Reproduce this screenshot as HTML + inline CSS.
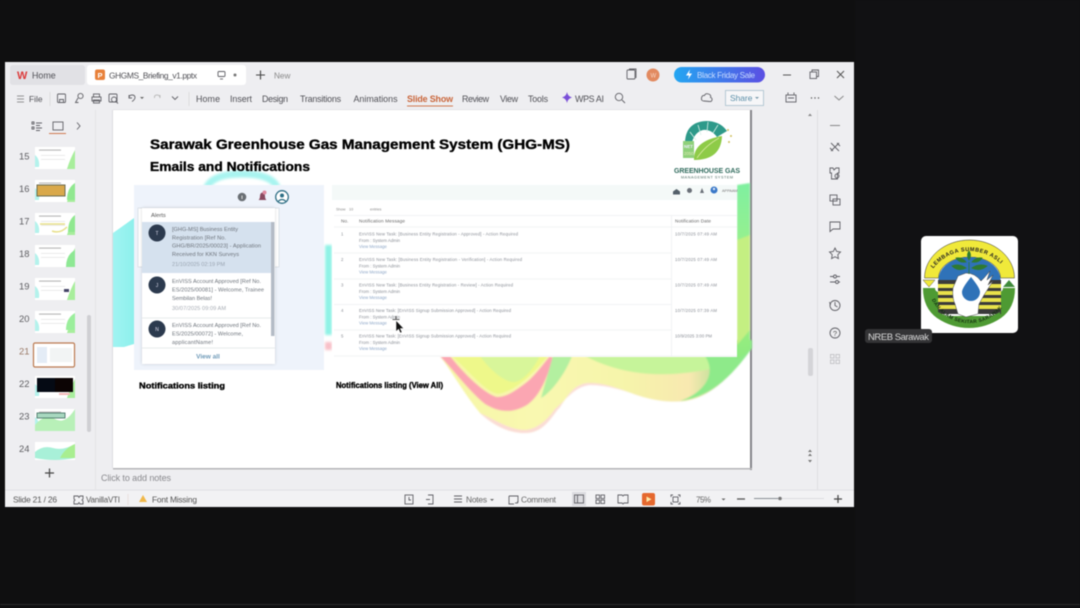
<!DOCTYPE html>
<html><head><meta charset="utf-8"><title>GHGMS Briefing</title>
<style>
html,body{margin:0;padding:0;background:#0f0f10;width:1080px;height:608px;overflow:hidden}
svg{display:block;position:absolute;left:0;top:0;filter:blur(.4px)}
text{font-family:"Liberation Sans",sans-serif}
.ui{font-size:8.900px;fill:#505056}
.i{fill:none;stroke:#606066;stroke-width:.9}
.t{font-size:5.600px;fill:#6e747c}
.r{font-size:4.300px;fill:#8a8e96}
.b{font-size:4.300px;fill:#8fa8c8}
.h{font-weight:bold;fill:#000;stroke:#000;stroke-width:.35}
</style></head><body>
<svg width="1080" height="608" viewBox="0 0 1080 608" xmlns="http://www.w3.org/2000/svg">
<defs>
<filter id="bl"><feGaussianBlur stdDeviation="1.2"/></filter>
<filter id="sb"><feGaussianBlur stdDeviation=".8"/></filter>
<filter id="sh" x="-10%" y="-10%" width="120%" height="120%"><feGaussianBlur stdDeviation="1.500"/></filter>
<linearGradient id="sale" x1="0" x2="1"><stop offset="0" stop-color="#23a6f2"/><stop offset="1" stop-color="#5b4fe3"/></linearGradient>
<linearGradient id="gr" x1="0" x2="0" y1="0" y2="1"><stop offset="0" stop-color="#7ff0a0"/><stop offset=".6" stop-color="#a8f080"/><stop offset="1" stop-color="#8cea80"/></linearGradient>
<linearGradient id="wv" x1="0" x2="1"><stop offset="0" stop-color="#f6f6a6"/><stop offset=".3" stop-color="#f9f8b0"/><stop offset=".6" stop-color="#f6f4aa"/><stop offset=".8" stop-color="#f8e8b0"/><stop offset=".92" stop-color="#a8dc90"/><stop offset="1" stop-color="#86e884"/></linearGradient>
<linearGradient id="cy" x1="0" x2="1"><stop offset="0" stop-color="#a0f4f2"/><stop offset="1" stop-color="#8ef0ec"/></linearGradient>
<path id="arcT" d="M932 270 A45.500 45.500 0 0 1 1006 270"/>
<path id="arcB" d="M931 298 A42 42 0 0 0 1008 298"/>
<g id="th"><rect width="40" height="22" fill="#fff"/><path d="M0 8q5 4 4 12l-4 0z" fill="#b4f2ec"/><path d="M32 22q3-10 8-19v19z" fill="#a8ee9c"/><rect x="4" y="2.500" width="22" height="1.200" fill="#bbb"/><rect x="6" y="8" width="24" height=".7" fill="#e2e2e2"/><rect x="6" y="12" width="24" height=".7" fill="#e2e2e2"/></g>
</defs>

<rect width="1080" height="608" fill="#0f0f10"/>
<rect x="855" y="0" width="225" height="608" fill="#111113"/>
<rect x="0" y="604" width="1080" height="1" fill="#2a2a2a"/>

<!-- window -->
<rect x="5" y="62" width="849" height="445" fill="#eeeef1"/>
<rect x="10" y="65" width="75" height="20" rx="3" fill="#e1e1e5"/>
<rect x="87" y="65" width="159" height="20" rx="3" fill="#fff"/>
<text x="17" y="79" font-size="11" font-weight="bold" fill="#dc3b3b">W</text>
<text x="32" y="78.500" class="ui">Home</text>
<rect x="95" y="69.500" width="10" height="10.500" rx="2" fill="#e8813a"/>
<text x="97.500" y="78" font-size="7.500" fill="#fff" font-weight="bold">P</text>
<text x="109" y="78.500" font-size="8.400" fill="#505056" textLength="88">GHGMS_Briefing_v1.pptx</text>
<rect x="218" y="71.500" width="7" height="5" rx="1" class="i"/><path d="M220 79h3" class="i"/>
<circle cx="235" cy="75" r="1.500" fill="#777"/>
<path d="M256 75h9M260.500 70.500v9" stroke="#444" stroke-width="1.100"/>
<text x="274" y="78.500" font-size="8.200" fill="#888">New</text>

<rect x="627" y="70" width="8" height="9" rx="1" class="i" stroke-width="1.200"/><path d="M629 69h7v9" class="i"/>
<circle cx="653" cy="75" r="6.500" fill="#e28a60"/>
<text x="650.500" y="77.500" font-size="6" fill="#f8d6c4">W</text>
<rect x="674" y="67" width="91" height="15.500" rx="7.700" fill="url(#sale)"/>
<path d="M690 69.500l-4 6h3l-1 4 4-6h-3z" fill="#fff"/>
<text x="697" y="78" font-size="8.200" fill="#c8dcff" textLength="58">Black Friday Sale</text>
<path d="M783 75h8" stroke="#555" stroke-width="1"/>
<rect x="810" y="72" width="6.500" height="6.500" class="i"/><path d="M812 72v-2h6.500v6.500h-2" class="i"/>
<path d="M837 71l7 7M844 71l-7 7" stroke="#555" stroke-width="1"/>

<!-- toolbar -->
<path d="M17 96h7M17 99h7M17 102h7" stroke="#777" stroke-width=".8"/>
<text x="29" y="102" font-size="8.400" fill="#505056">File</text>
<path d="M50 92v14" stroke="#ddd"/>
<rect x="57.500" y="94" width="8" height="8.500" rx="1" class="i"/><path d="M59.500 102.500v-3h4v3" class="i"/>
<circle cx="80.500" cy="96" r="2.600" class="i"/><path d="M78 98l-2.500 4.500h3" class="i"/>
<rect x="92" y="97" width="9" height="4" class="i"/><rect x="93.500" y="94" width="6" height="3" class="i"/><rect x="93.500" y="100" width="6" height="3" class="i"/>
<rect x="109" y="94" width="8" height="8" rx="1" class="i"/><circle cx="114" cy="99.500" r="2.500" class="i"/><path d="M116 101.500l2 2" class="i"/>
<path d="M129 98q0-3 3-3t3 2.500q0 2-3 4M129 95v3h3" class="i"/>
<path d="M140 97l2 2 2-2" fill="#666"/>
<path d="M160 98q0-3-3-3t-2.500 3M160 95v3" fill="none" stroke="#bbb"/>
<path d="M172 96.500l3 3 3-3" class="i"/>
<path d="M189 92v14" stroke="#ddd"/>
<g>
<text x="196" y="102" class="ui" textLength="24">Home</text>
<text x="230" y="102" class="ui" textLength="22">Insert</text>
<text x="262" y="102" class="ui" textLength="26">Design</text>
<text x="300" y="102" class="ui" textLength="41">Transitions</text>
<text x="353.500" y="102" class="ui" textLength="44">Animations</text>
<text x="462" y="102" class="ui" textLength="27">Review</text>
<text x="500" y="102" class="ui" textLength="18">View</text>
<text x="528" y="102" class="ui" textLength="20">Tools</text>
<text x="575" y="102" class="ui" textLength="29">WPS AI</text>
</g>
<text x="407" y="102" font-size="8.900" font-weight="bold" fill="#c9653a" textLength="46">Slide Show</text>
<rect x="407" y="105.500" width="46" height="1" fill="#d07a50"/>
<path d="M567 92q.7 4.300 5 5.500q-4.300 1.200-5 5.500q-.7-4.300-5-5.500q4.300-1.200 5-5.500z" fill="#7a4fd8"/>
<circle cx="619" cy="97" r="3.700" class="i"/><path d="M622 100l3 3" class="i"/>
<path d="M704 101q-3 0-2.500-3t3-2.500q1-2.500 4-1.500t2 3.500q2 .5 1.500 2.500t-2.500 1.500z" class="i"/>
<rect x="725.500" y="90.500" width="38" height="15" fill="#f6f6f8" stroke="#a8c0cc" stroke-width=".8"/>
<text x="730" y="101" font-size="8.400" fill="#5a8ea8">Share</text><path d="M755 97l2 2 2-2" fill="#7a99aa"/>
<rect x="786" y="95" width="10" height="7" class="i"/><path d="M788 92.500v2M794 92.500v2M788 98h6" class="i"/>
<circle cx="811.500" cy="98" r=".7" fill="#555"/><circle cx="815" cy="98" r=".7" fill="#555"/><circle cx="818.500" cy="98" r=".7" fill="#555"/>
<path d="M834.500 96l4.500 4 4.500-4" fill="none" stroke="#888"/>

<!-- left panel -->
<path d="M95.500 110v380" stroke="#e3e3e6"/>
<path d="M32 122h2v2h-2zM32 127h2v2h-2z" class="i"/><path d="M36 123h6M36 125.500h4M36 128h6M36 130.500h4" class="i"/>
<rect x="53" y="122" width="10" height="8" class="i"/><rect x="49" y="133" width="17" height="1" fill="#cf7a50"/>
<path d="M77 122.500l3 3.500-3 3.500" class="i"/>

<g font-size="9.400" fill="#5c5c60">
<text x="19" y="159.500">15</text><text x="19" y="192">16</text><text x="19" y="224.500">17</text><text x="19" y="257">18</text><text x="19" y="289.500">19</text><text x="19" y="322">20</text><text x="19" y="354.500" fill="#9a7a68">21</text><text x="19" y="387">22</text><text x="19" y="419.500">23</text><text x="19" y="452">24</text>
</g>
<use href="#th" x="35" y="147"/>
<use href="#th" x="35" y="180"/><rect x="37" y="185" width="28" height="11" fill="#d9a84a" stroke="#6b6b50"/><path d="M67 200q0-12 8-17v17z" fill="#90e890"/>
<use href="#th" x="35" y="213"/><path d="M40 224h25M52 231q8 3 15-4" stroke="#e8e08a" stroke-width="1.500" fill="none"/><path d="M68 232q0-12 7-17v17z" fill="#90e890"/>
<use href="#th" x="35" y="245"/><path d="M66 267q0-12 9-17v17z" fill="#8ee894"/>
<use href="#th" x="35" y="278"/><rect x="64" y="289" width="5" height="3" fill="#446"/>
<use href="#th" x="35" y="311"/><path d="M66 330q0-12 9-17v17z" fill="#9bee9c"/>
<rect x="33.500" y="343" width="41" height="24" rx="1.500" fill="#fff" stroke="#bb7a50" stroke-width="1.200"/>
<rect x="37" y="347" width="10" height="16" fill="#e4ecf6"/><rect x="50" y="348" width="22" height="14" fill="#f2f4f4"/>
<use href="#th" x="35" y="376"/><rect x="37" y="378" width="18" height="14" fill="#050a14"/><rect x="55" y="378" width="18" height="14" fill="#0c0404"/><rect x="59" y="393" width="11" height="2" fill="#f4b8b8"/>
<use href="#th" x="35" y="409"/><path d="M35 425q10-12 20-6t20-10v22h-40z" fill="#b8f0b8"/><rect x="37" y="413" width="28" height="5" fill="#a8d8c0" stroke="#3a6a5a" stroke-width=".8"/>
<g><rect x="35" y="442" width="40" height="18" fill="#fff"/><path d="M35 452q8-7 18-4t22-4v14q-20 4-40 0z" fill="#a8f0d8"/><path d="M60 458q5-10 15-14v14z" fill="#a8ee90"/></g>
<rect x="87" y="315" width="4" height="117" rx="2" fill="#cfcfd3"/>
<path d="M45 473h9M49.500 468.500v9" stroke="#444" stroke-width="1.200"/>

<!-- slide -->
<rect x="750" y="110" width="2" height="360" fill="#85858a"/>
<rect x="113" y="468" width="639" height="1.500" fill="#b5b5b8"/>
<rect x="113" y="109.500" width="637" height="1" fill="#d8d8dc"/>
<rect x="112" y="110" width="1" height="358" fill="#dcdce0"/>
<rect x="113" y="110" width="637" height="358" fill="#fff"/>

<!-- decorative shapes -->
<path d="M113 233L134 218V344L124 347H113Z" fill="url(#cy)"/>
<g filter="url(#bl)">
<path d="M206 190q4-16 36-16t36 16" fill="none" stroke="#a8f4f0" stroke-width="7"/>
<rect x="325" y="245" width="7" height="90" fill="#8ff2e6"/>
<rect x="325" y="342" width="7" height="8" fill="#f8c0c8"/>
</g>
<g filter="url(#sb)">
<!-- main wave body -->
<path d="M440 356C452 372 465 395 480 413C495 427 510 433 525 433C545 433 552 415 560 407C568 395 575 383 590 383C610 383 630 394 647 398C662 402 675 402 685 401C712 397 735 372 752 348L752 340H440Z" fill="url(#wv)"/>
<!-- pink rim along the lower edge -->
<path d="M480 413C495 427 510 433 525 433C545 433 552 415 560 407C568 395 575 383 590 383C610 383 630 394 647 398C630 393 610 385 590 385C575 386 566 400 555 409C548 419 538 429 525 430C510 430 495 420 480 413Z" fill="#fbdcd6"/>
<!-- pink band -->
<path d="M440 356C455 372 470 392 485 404C498 412 512 414 527 405C540 396 547 378 553 358L550 356C540 368 533 378 523 385C512 393 505 397 497 397C485 394 465 375 450 356Z" fill="#fba6b2"/>
<!-- upper soft greens -->
<path d="M452 356C470 372 485 392 498 394C515 392 535 372 548 356Z" fill="#eef88a"/>
<path d="M480 356C490 370 505 383 515 382C525 380 535 366 540 356Z" fill="#d8f69a"/>
<path d="M553 356L541 398C552 392 566 372 572 356Z" fill="#b3f0a0"/>
<path d="M585 356Q640 385 715 368Q732 362 742 356Z" fill="#c6f49a"/>
<path d="M680 401C712 397 735 372 752 348L752 340L705 356C718 375 702 394 680 401Z" fill="#8eea8a"/>
<path d="M737 185L750 183V350L737 360Z" fill="url(#gr)"/>
<path d="M737 240L750 235V330L737 345Z" fill="#c4ef82"/>
</g>

<text x="150" y="149" font-size="14" class="h" textLength="420" lengthAdjust="spacingAndGlyphs">Sarawak Greenhouse Gas Management System (GHG-MS)</text>
<text x="150" y="171" font-size="12.500" class="h" textLength="160" lengthAdjust="spacingAndGlyphs">Emails and Notifications</text>

<!-- GHG logo -->
<g>
<path d="M685 142Q686 122 706 121Q720 121 727 131L717 137Q711 129 703 130Q695 132 692 142Z" fill="#2e9a8a"/>
<path d="M690 132l6 8M698 125l3 10M708 122l-1 10M718 125l-5 8" fill="none" stroke="#d8f0e8" stroke-width=".8"/>
<rect x="683" y="141" width="11" height="17" fill="#8fd07a"/>
<text x="684" y="148" font-size="4.500" font-weight="bold" fill="#eef">NET</text>
<text x="684" y="155" font-size="4.300" fill="#e4ecb8">2050</text>
<path d="M694 160q-1-19 28-24q-1 24-28 24z" fill="#8ecb48"/>
<path d="M697 158q8-12 22-20" stroke="#d8eaa0" fill="none" stroke-width=".8"/>
<circle cx="728" cy="130" r="1" fill="#d0c060"/><circle cx="731" cy="136" r="1" fill="#d0c060"/><circle cx="729" cy="142" r="1" fill="#d0c060"/>
<text x="674" y="173" font-size="7" font-weight="bold" fill="#2f6a5c" textLength="66">GREENHOUSE GAS</text>
<text x="681" y="178.500" font-size="3.700" fill="#4a6a60" textLength="52">MANAGEMENT SYSTEM</text>
</g>

<!-- left screenshot -->
<rect x="134" y="185" width="190" height="185" fill="#eef3fb"/>
<rect x="138" y="208" width="141" height="59" fill="#fff" stroke="#dde2e8"/>
<rect x="142" y="208" width="133" height="156" fill="#000" opacity=".16" filter="url(#sh)"/>
<rect x="142" y="208" width="133" height="156" fill="#fff"/>
<rect x="142" y="222" width="129" height="51" fill="#d5e1ee"/>
<rect x="271" y="222" width="3.500" height="114" fill="#b4bbc6"/>
<path d="M142 318h129M142 348h133" stroke="#e0e3e8" stroke-width=".8"/>
<text x="151" y="217" font-size="5.800" fill="#555">Alerts</text>
<circle cx="157" cy="233" r="8.500" fill="#2c3a4e"/><text x="157" y="235" font-size="5" fill="#dde" text-anchor="middle">T</text>
<circle cx="157" cy="285" r="8.500" fill="#2c3a4e"/><text x="157" y="287" font-size="5" fill="#dde" text-anchor="middle">J</text>
<circle cx="157" cy="329" r="8.500" fill="#2c3a4e"/><text x="157" y="331" font-size="5" fill="#dde" text-anchor="middle">N</text>
<text x="172" y="231" class="t" textLength="66">[GHG-MS] Business Entity</text>
<text x="172" y="239.500" class="t" textLength="54">Registration [Ref No.</text>
<text x="172" y="247.500" class="t" textLength="89">GHG/BR/2025/00023] - Application</text>
<text x="172" y="256" class="t" textLength="67">Received for KKN Surveys</text>
<text x="172" y="266" class="t" style="fill:#9aa5b2" textLength="53">21/10/2025 02:19 PM</text>
<text x="172" y="283" class="t" textLength="89">EnVISS Account Approved [Ref No.</text>
<text x="172" y="291.500" class="t" textLength="92">ES/2025/00081] - Welcome, Trainee</text>
<text x="172" y="300" class="t" textLength="40">Sembilan Belas!</text>
<text x="172" y="310" class="t" style="fill:#a8adb5" textLength="54">30/07/2025 09:09 AM</text>
<text x="172" y="327" class="t" textLength="89">EnVISS Account Approved [Ref No.</text>
<text x="172" y="335.500" class="t" textLength="71">ES/2025/00072] - Welcome,</text>
<text x="172" y="344" class="t" textLength="41">applicantName!</text>
<text x="208" y="358.500" font-size="6.500" fill="#6f9ab8" font-weight="bold" text-anchor="middle">View all</text>
<circle cx="242" cy="197" r="4.300" fill="#6a6f74"/><rect x="241.500" y="195.500" width="1" height="3.500" fill="#ddd"/>
<path d="M258.500 200q1.500-1 1.500-4t2.500-3.500q2.500.5 2.500 3.500t1.500 4z" fill="#8a4a60"/><circle cx="264.500" cy="192.500" r="2" fill="#e08aa0"/>
<circle cx="282" cy="197" r="6.300" fill="#fff" stroke="#2f6f85" stroke-width="1.300"/><circle cx="282" cy="195.500" r="2" fill="#2f6f85"/><path d="M278 201.500q4-4 8 0" stroke="#2f6f85" fill="none" stroke-width="1.200"/>
<text x="139" y="388.500" font-size="8.600" class="h" textLength="86" lengthAdjust="spacingAndGlyphs">Notifications listing</text>

<!-- right screenshot -->
<rect x="332" y="185" width="405" height="172" fill="#fff"/>
<rect x="332" y="185" width="405" height="15" fill="#f4f9f8"/>
<path d="M673 191.500l3.500-2.500 3.500 2.500v3h-7z" fill="#54606a"/>
<circle cx="689.500" cy="190.500" r="2.500" fill="#6a7078"/>
<path d="M700 193l2-5 2 5z" fill="#6a7078"/>
<circle cx="714" cy="190" r="3.500" fill="#3b78c8"/><circle cx="714" cy="189" r="1.200" fill="#dce8f8"/>
<text x="722" y="192" font-size="3.800" fill="#777">APPAAM</text>
<text x="336" y="210.500" font-size="3.800" fill="#888">Show</text><text x="349" y="210.500" font-size="3.800" fill="#888">10</text><text x="370" y="210.500" font-size="3.800" fill="#888">entries</text>
<path d="M334 215.500h403M334 227h403" stroke="#eef0f2" stroke-width=".8"/>
<path d="M671.500 215.500v141" stroke="#eef0f2" stroke-width=".8"/>
<text x="341" y="222.500" font-size="4.700" fill="#666">No.</text>
<text x="359" y="222.500" font-size="4.700" fill="#666" textLength="46">Notification Message</text>
<text x="675" y="222.500" font-size="4.700" fill="#666" textLength="36">Notification Date</text>
<path d="M334 253h337M334 279h337M334 304.500h337M334 330h337M334 356h403" stroke="#eef0f2" stroke-width=".8"/>

<text x="341" y="235.500" class="r">1</text><text x="359" y="235.500" class="r" textLength="159">EnVISS New Task: [Business Entity Registration - Approved] - Action Required</text><text x="359" y="242" class="r">From : System Admin</text><text x="359" y="248" class="b">View Message</text><text x="675" y="235.500" class="r" textLength="42">10/7/2025 07:49 AM</text>
<text x="341" y="261" class="r">2</text><text x="359" y="261" class="r" textLength="163">EnVISS New Task: [Business Entity Registration - Verification] - Action Required</text><text x="359" y="267.500" class="r">From : System Admin</text><text x="359" y="273.500" class="b">View Message</text><text x="675" y="261" class="r" textLength="42">10/7/2025 07:49 AM</text>
<text x="341" y="286.500" class="r">3</text><text x="359" y="286.500" class="r" textLength="154">EnVISS New Task: [Business Entity Registration - Review] - Action Required</text><text x="359" y="293" class="r">From : System Admin</text><text x="359" y="299" class="b">View Message</text><text x="675" y="286.500" class="r" textLength="42">10/7/2025 07:49 AM</text>
<text x="341" y="312" class="r">4</text><text x="359" y="312" class="r" textLength="152">EnVISS New Task: [EnVISS Signup Submission Approved] - Action Required</text><text x="359" y="318.500" class="r">From : System Admin</text><text x="359" y="324.500" class="b">View Message</text><text x="675" y="312" class="r" textLength="42">10/7/2025 07:39 AM</text>
<text x="341" y="337.500" class="r">5</text><text x="359" y="337.500" class="r" textLength="152">EnVISS New Task: [EnVISS Signup Submission Approved] - Action Required</text><text x="359" y="344" class="r">From : System Admin</text><text x="359" y="350" class="b">View Message</text><text x="675" y="337.500" class="r" textLength="37">10/9/2025 3:00 PM</text>

<text x="336" y="388" font-size="8.400" class="h" textLength="107" lengthAdjust="spacingAndGlyphs">Notifications listing (View All)</text>

<!-- cursor -->
<path d="M396 320.500v11l2.600-2.400 1.700 3.900 1.700-.8-1.700-3.700h3.400z" fill="#111" stroke="#fff" stroke-width=".5"/>
<path d="M392.500 319.500h7M396 316v3" stroke="#222" stroke-width=".8"/>

<!-- right scroll & sidebar -->
<path d="M808 116l2-2.500 2 2.500z" fill="#888"/>
<rect x="808" y="348" width="5" height="28" rx="2" fill="#d4d4d8"/>
<path d="M808 452l2-2.500 2 2.500zM808 456l2-2.500 2 2.500zM808 460l2 2.500 2-2.500z" fill="#777"/>
<path d="M817.500 110v380" stroke="#dedee2"/>
<path d="M830 125.500h10" stroke="#888" stroke-width="1"/>
<path d="M831 143l8 8M839 143l-8 8M830 148l3 3M837 143l3 3" class="i" stroke-width="1.200"/>
<path d="M830 168h3l1 2 2-2h3v5h-1.500v6h-6v-6h-1.500z" class="i"/><circle cx="837" cy="176" r="2" class="i"/>
<rect x="830" y="195" width="7" height="6" class="i"/><rect x="833" y="199" width="7" height="6" class="i"/>
<path d="M830 222h10v7h-7l-3 2.500z" class="i"/>
<path d="M835 248l1.700 3.500 3.800.5-2.700 2.700.6 3.800-3.400-1.800-3.400 1.800.6-3.800-2.700-2.700 3.800-.5z" class="i"/>
<circle cx="835" cy="276.500" r="1.500" class="i"/><path d="M830 276.500h3.500M836.500 276.500h3.500M830 282h5.500M838.500 282h1.500" class="i"/><circle cx="837" cy="282" r="1.500" class="i"/>
<circle cx="835" cy="305.500" r="5" class="i"/><path d="M835 302v3.500l2.500 1.500M829.500 302l1 3" class="i"/>
<circle cx="835" cy="333" r="5" class="i"/><text x="835" y="335.800" font-size="7.500" fill="#555" text-anchor="middle">?</text>
<g fill="none" stroke="#c6c6ca"><rect x="830.500" y="354.500" width="3.500" height="3.500"/><rect x="836" y="354.500" width="3.500" height="3.500"/><rect x="830.500" y="360" width="3.500" height="3.500"/><rect x="836" y="360" width="3.500" height="3.500"/></g>

<!-- notes -->
<text x="101" y="481" font-size="9" fill="#8a8a8e" textLength="70">Click to add notes</text>

<!-- status -->
<path d="M5 490h849" stroke="#e2e2e5"/>
<rect x="5" y="491" width="849" height="16" fill="#f2f2f4"/>
<text x="13" y="502.500" font-size="8.400" fill="#555" textLength="44">Slide 21 / 26</text>
<path d="M74 496h4l1 1.500 1-1.500h3v3l-1 1 1 1v3h-3l-1-1.500-1 1.500h-4v-3l1-1-1-1z" class="i"/>
<text x="86" y="502.500" font-size="8" fill="#555" textLength="34">VanillaVTI</text>
<path d="M128 494v11" stroke="#eadfdf"/>
<path d="M143 495l4 7h-8z" fill="#f0b84a"/>
<text x="152" y="502.500" font-size="8.400" fill="#555" textLength="45">Font Missing</text>
<rect x="405" y="495" width="8" height="9" class="i"/><path d="M409 497v3h2" class="i"/>
<path d="M428 495h5v9h-5M426 499.500h4" class="i"/>
<path d="M454 496h8M454 499h8M454 502h8" class="i"/>
<text x="466" y="502.500" font-size="8.400" fill="#666" textLength="21">Notes</text><path d="M490 499l2 2 2-2" fill="#666"/>
<path d="M509 496h9v6h-1M509 496v8h5" class="i"/><path d="M515 503h3" class="i" stroke-width="1.500"/>
<text x="521" y="502.500" font-size="8.400" fill="#666" textLength="35">Comment</text>
<rect x="572" y="492" width="14" height="14" fill="#dcdce0"/>
<rect x="574.500" y="495" width="9" height="8" class="i"/><path d="M577.500 495v8" class="i"/>
<rect x="596" y="495" width="3.500" height="3.500" class="i"/><rect x="601" y="495" width="3.500" height="3.500" class="i"/><rect x="596" y="500" width="3.500" height="3.500" class="i"/><rect x="601" y="500" width="3.500" height="3.500" class="i"/>
<path d="M618 495h4l1 1 1-1h4v8h-4l-1 1-1-1h-4z" class="i"/>
<rect x="642" y="493" width="13" height="12.500" rx="2" fill="#e5682e"/><path d="M646.500 496.500l5 2.800-5 2.800z" fill="#fde9a8"/>
<path d="M671 497v-2h2M678 495h2v2M680 502v2h-2M673 504h-2v-2" class="i"/><rect x="673" y="497" width="5" height="5" class="i"/>
<text x="696" y="502.500" font-size="8" fill="#666" textLength="15">75%</text>
<path d="M721.500 498.500l2 2 2-2" fill="#666"/>
<path d="M737 499h8" stroke="#555" stroke-width="1.300"/>
<path d="M754 498.500h24" stroke="#8a8f96" stroke-width="1"/><path d="M782 498.500h42" stroke="#dcdce0" stroke-width="1"/>
<circle cx="780" cy="498.500" r="1.800" fill="#777"/>
<path d="M834 499h8M838 495v8" stroke="#444" stroke-width="1.200"/>

<!-- NREB tile -->
<rect x="921" y="236" width="97" height="97" rx="5" fill="#fff"/>
<path d="M924.500 278A45 38 0 0 1 1014.500 278H1000.500A31 21 0 0 0 938.500 278Z" fill="#f0e93a" stroke="#333" stroke-width=".5"/>
<text font-size="5.500" font-weight="bold" fill="#222" letter-spacing=".5"><textPath href="#arcT" startOffset="2">LEMBAGA SUMBER ASLI</textPath></text>
<path d="M938.500 280A31 23 0 0 1 1000.500 280Z" fill="#2f72b8"/>
<path d="M923 288h12q0 3 3 4v20q14 8 31 8t31-8v-20q3-1 3-4h12q0 20-14 30-15 10-32 10t-32-10q-14-10-14-30z" fill="#4e9a33"/>
<rect x="938" y="280" width="63" height="34" fill="#3a3a3a"/>
<path d="M938 284h63v4h-63zM938 291h63v4h-63zM938 298h63v4h-63zM938 305h63v4h-63z" fill="#e8e24a"/>
<path d="M938 312q14 8 31 8t31-8v4h-62z" fill="#4e9a33"/>
<path d="M923 280h12l-6 7z" fill="#f0e93a" stroke="#555" stroke-width=".5"/>
<path d="M1003 287l6-7 6 7z" fill="#3f8a3a"/>
<path d="M966 273l-8 3-5 12q-1 10 2 16l3 10 8 3 12-3 1-10 5-9 9-14-5 4 5-10-6 5 3-9-6 7-3 3q-6-8-15-8z" fill="#fff" stroke="#444" stroke-width=".5"/>
<path d="M971 277q9 11 9 15a9 9 0 0 1-18 0q0-4 9-15z" fill="#2f72b8"/>
<path d="M969 274v-12M969 260q-3-5 0-9q3 4 0 9zM966 268q-7-5-14-2q6 6 14 2zM972 268q7-5 15-2q-7 6-15 2zM966 262q-4-5-10-4q3 5 10 4zM972 262q4-5 10-4q-3 5-10 4z" fill="#2f7a30" stroke="#2f7a30" stroke-width=".8"/>
<text font-size="5" font-weight="bold" fill="#14300f" letter-spacing=".3"><textPath href="#arcB" startOffset="2">DAN ALAM SEKITAR SARAWAK</textPath></text>

<rect x="865" y="329" width="67" height="14" rx="3" fill="#343436"/>
<text x="868" y="340" font-size="9.500" fill="#d8d8d8" textLength="61">NREB Sarawak</text>
</svg>
</body></html>
